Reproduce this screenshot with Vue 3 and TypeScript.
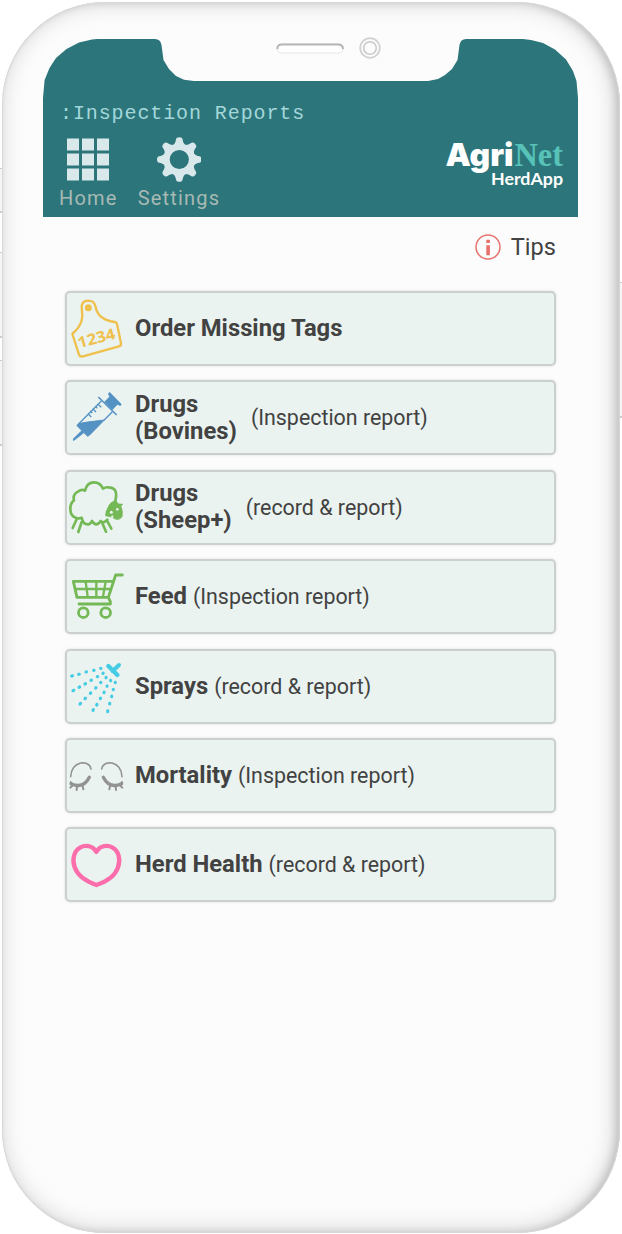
<script setup lang="ts">
type IconName = 'tag' | 'syringe' | 'sheep' | 'cart' | 'spray' | 'eyes' | 'heart'

interface Report {
  icon: IconName
  title: string
  note: string
  stacked?: boolean
  viewBox: string
}

const reports: Report[] = [
  { icon: 'tag', title: 'Order Missing Tags', note: '', viewBox: '21 23 180 213' },
  { icon: 'syringe', title: 'Drugs (Bovines)', note: '(Inspection report)', stacked: true, viewBox: '21 21 180 213' },
  { icon: 'sheep', title: 'Drugs (Sheep+)', note: '(record & report)', stacked: true, viewBox: '21 20 180 213' },
  { icon: 'cart', title: 'Feed', note: '(Inspection report)', viewBox: '21 18 180 213' },
  { icon: 'spray', title: 'Sprays', note: '(record & report)', viewBox: '21 16 180 213' },
  { icon: 'eyes', title: 'Mortality', note: '(Inspection report)', viewBox: '21 15 180 213' },
  { icon: 'heart', title: 'Herd Health', note: '(record & report)', viewBox: '21 14 180 213' },
]

const gearTeeth = [0, 45, 90, 135, 180, 225, 270, 315]

// Jets fan out from the nozzle; each droplet is [x, y].
const droplets: [number, number][][] = [
  [[35, 91], [56, 86], [78, 79], [101, 74], [122, 68]],
  [[39, 135], [57, 125], [75, 115], [93, 104], [112, 93], [129, 83]],
  [[60, 175], [75, 159], [91, 143], [107, 127], [122, 111], [138, 96]],
  [[99, 194], [110, 178], [121, 159], [132, 141], [141, 122], [152, 105]],
  [[143, 198], [149, 175], [155, 153], [160, 132], [166, 111]],
]
</script>

<template>
  <div class="stage">
    <i class="side left a"></i><i class="side left b"></i><i class="side left c"></i><i class="side right"></i>
    <main class="phone">
      <svg class="speaker" viewBox="0 0 110 24" width="110" height="24">
        <rect x="2" y="8" width="66" height="9" rx="4.5" fill="#fff" stroke="#e6e6e6" stroke-width="1.2" />
        <path d="M2.500 13Q2 8.500 7 8.500H63Q68 8.500 68 13" fill="none" stroke="#b5b5b5" stroke-width="2" />
        <circle cx="95" cy="12" r="9.800" fill="#fcfcfc" stroke="#d2d2d2" stroke-width="1.800" />
        <circle cx="95" cy="12" r="6.300" fill="#fcfcfc" stroke="#c9c9c9" stroke-width="1.600" />
      </svg>
      <header class="header">
        <svg class="header-bg" viewBox="43 39 535 178" width="535" height="178">
          <path
            fill="#2c767b"
            d="M43 217V98L44.600 80L49.500 68L56 58L66.500 49L79 42.600L92 39.500L97 39H155Q160.500 39 161.500 45L163.500 60L169 69L176 76L184 79.700L194 81H428L438 79L445 75L452 69L457.500 60L459.500 45Q460.500 39 466 39H523L531 40L543 43L555 49.500L566 59.500L573 71L576.500 81L578 98V217Z"
          />
        </svg>
        <div class="crumb">:Inspection Reports</div>
        <nav class="nav">
          <a class="nav-item home">
            <svg viewBox="0 0 42 42" width="42" height="42" fill="#d8e8eb">
              <template v-for="r in 3" :key="r">
                <rect v-for="c in 3" :key="c" :x="(c - 1) * 15" :y="(r - 1) * 15" width="12" height="12" />
              </template>
            </svg>
            <span>Home</span>
          </a>
          <a class="nav-item settings">
            <svg viewBox="-23.300 -22.500 45 45" width="45" height="45">
              <g fill="#d8e8eb">
                <path
                  v-for="a in gearTeeth"
                  :key="a"
                  :transform="`rotate(${a})`"
                  d="M-8 -13Q-3.800 -15.500 -3.300 -20Q-3 -22.300 0 -22.300Q3 -22.300 3.300 -20Q3.800 -15.500 8 -13Z"
                />
              </g>
              <circle r="12.800" fill="none" stroke="#d8e8eb" stroke-width="6.400" />
            </svg>
            <span>Settings</span>
          </a>
          <svg class="logo" viewBox="0 0 120 60" width="120" height="60">
            <text class="logo-agri" x="0.500" y="30" textLength="68" lengthAdjust="spacingAndGlyphs">Agri</text>
            <text class="logo-net" x="69.500" y="30" textLength="48.500" lengthAdjust="spacingAndGlyphs">Net</text>
            <text class="logo-sub" x="46" y="49" textLength="72" lengthAdjust="spacingAndGlyphs">HerdApp</text>
          </svg>
        </nav>
      </header>
      <div class="tips">
        <svg viewBox="0 0 26 26" width="26" height="26">
          <circle cx="13" cy="13" r="12" fill="none" stroke="#e8716c" stroke-width="1.500" />
          <path d="M11.300 5.700h3.600v3.300h-3.600zM11.300 11.300h3.600v10h-3.600z" fill="#e8716c" />
        </svg>
        <span>Tips</span>
      </div>
      <section class="list">
        <article v-for="item in reports" :key="item.title" class="row" :class="{ stacked: item.stacked }">
          <svg class="icon" :viewBox="item.viewBox" width="60" height="71">
            <g v-if="item.icon === 'tag'" fill="none" stroke="#efc04c" stroke-width="7" stroke-linejoin="round">
              <path d="M65 65Q65 47 84 46Q102 46 106 62Q111 92 137 103Q152 109 164 110Q170 111 171 116L183 174Q184 181 177 183L69 213Q60 215 57 208L38 149Q36 145 42 141Q66 119 67 91Z" />
              <circle cx="85" cy="67" r="10.500" fill="#efc04c" stroke="none" />
              <text class="tag-text" transform="translate(58 189) rotate(-15)" textLength="115" lengthAdjust="spacingAndGlyphs">1234</text>
            </g>
            <g v-else-if="item.icon === 'syringe'" fill="none" stroke="#5592c4">
              <path d="M53 148L51 152L83 184L89 180L133 135L83 141Q61 144 53 148Z" fill="#5592c4" stroke-width="3" stroke-linejoin="round" />
              <path d="M55 148L124 78M132 136L157 110" stroke-width="4" />
              <path d="M115 66L170 120" stroke-width="5" />
              <path d="M133 80L148 65L144 56L149 51L185 88L181 93L172 89L157 105Z" fill="#5592c4" stroke="none" />
              <path d="M66 165L39 191V198L44 196L72 174Z" fill="#5592c4" stroke="none" />
              <path d="M84 116L94 126M91 108L97 114M98 101L108 111M106 94L112 100M113 87L124 97" stroke-width="4" />
            </g>
            <g v-else-if="item.icon === 'sheep'" fill="none" stroke="#74b955" stroke-width="8" stroke-linecap="round" stroke-linejoin="round">
              <path d="M166 106Q176 66 145 66Q137 65 129 70Q121 51 102 51Q81 51 75 76Q65 71 55 78Q37 87 42 105Q31 113 31 130Q31 152 49 158Q58 161 65 157Q69 178 85 177Q92 176 96 167Q109 187 122 167Q131 176 142 163" />
              <path d="M49 164L38 188M65 170L55 200M126 171L138 199M141 166L154 190" />
              <path d="M145 126Q149 110 168 106L174 116L188 117L182 122Q189 136 186 153Q180 166 164 160Q158 154 147 153L137 151Q137 137 145 126Z" fill="#74b955" stroke-width="3" />
              <circle cx="154" cy="141" r="4.500" fill="#eaf3f0" stroke="none" />
              <circle cx="172" cy="132" r="4" fill="#eaf3f0" stroke="none" />
              <circle cx="157" cy="154" r="3.500" fill="#eaf3f0" stroke="none" />
            </g>
            <g v-else-if="item.icon === 'cart'" fill="none" stroke="#74b955" stroke-width="8.500" stroke-linecap="round" stroke-linejoin="round">
              <path d="M187 60H167L145 127H51L40 79H161M57 147H151V140L145 127" />
              <path d="M46 102H152M77 80L83 125M109 80V125M137 80L129 125" stroke-width="7" />
              <circle cx="70" cy="173" r="14.500" />
              <circle cx="137" cy="173" r="14.500" />
            </g>
            <g v-else-if="item.icon === 'spray'" fill="none" stroke="#45cbe4" stroke-linecap="round">
              <path d="M145 61L172 88" stroke-width="13" />
              <path d="M158 76L177 58" stroke-width="12" />
              <template v-for="(jet, j) in droplets" :key="j">
                <path v-for="([x, y], k) in jet" :key="k" :d="`M${x} ${y}l${(158 - x) / 55} ${(70 - y) / 55}`" stroke-width="9.500" />
              </template>
            </g>
            <g v-else-if="item.icon === 'eyes'" fill="none" stroke="#929292" stroke-linecap="round">
              <g v-for="flip in ['', 'translate(218 0) scale(-1 1)']" :key="flip" :transform="flip">
                <path d="M32 125Q34 91 62 84Q89 81 93 102" stroke-width="4.500" />
                <path d="M33 146Q70 163 88 127" stroke-width="10" />
                <path d="M39 150L31 158M51 154L50 165M68 153L70 163M32 141L36 147" stroke-width="6" />
              </g>
            </g>
            <path
              v-else
              d="M109 83C97 63 76 61 60 70C41 81 36 106 44 129C55 159 83 173 109 182C136 173 164 159 174 129C182 106 177 81 158 70C142 61 121 63 109 83Z"
              fill="none" stroke="#fb6eab" stroke-width="13" stroke-linejoin="round"
            />
          </svg>
          <div class="label">
            <strong>{{ item.title }}</strong>
            <span v-if="item.note">{{ item.note }}</span>
          </div>
        </article>
      </section>
    </main>
  </div>
</template>

<style>
body {
  margin: 0;
  background: #fff;
}
</style>

<style scoped>
.stage {
  position: relative;
  box-sizing: border-box;
  width: 622px;
  height: 1234px;
  padding: 2px 2px 1px 1.5px;
  overflow: hidden;
  font-family: Roboto, "Liberation Sans", sans-serif;
  color: #424242;
}
.side {
  position: absolute;
  width: 4px;
  box-sizing: border-box;
  background: #f5f5f5;
  border-top: 1px solid #ccc;
  border-bottom: 2px solid #ccc;
}
.left { left: 0; }
.right { right: 0; top: 282px; height: 136px; }
.a { top: 168px; height: 45px; }
.b { top: 252px; height: 86px; }
.c { top: 360px; height: 86px; }
.phone {
  position: relative;
  box-sizing: border-box;
  display: flex;
  flex-direction: column;
  height: 1231px;
  padding: 0 41.5px;
  border-radius: 103px;
  background: #fcfcfc;
  box-shadow:
    inset 0 0 1px 1px #d8d8d8,
    inset -4px 0 8px rgba(0, 0, 0, 0.16),
    inset -3px -1px 22px 3px rgba(0, 0, 0, 0.15);
}
.speaker {
  margin: 34px 0 -21px 232px;
  position: relative;
  z-index: 1;
  flex: none;
}
.header {
  position: relative;
  width: 535px;
  height: 178px;
  flex: none;
}
.header-bg {
  position: absolute;
  inset: 0;
  z-index: 0;
}
.crumb {
  position: relative;
  padding: 63px 0 0 17px;
  font: 20px/24px "Liberation Mono", monospace;
  letter-spacing: 0.9px;
  color: #a4d7da;
}
.nav {
  position: relative;
  display: flex;
  padding: 8px 13px 0 16px;
}
.nav-item {
  display: flex;
  flex-direction: column;
  align-items: center;
  color: #a7b9b4;
  font-size: 20px;
  line-height: 24px;
  letter-spacing: 1.2px;
}
.nav-item svg { height: 45px; margin: 2.5px 0 4.5px; }
.settings { margin-left: 20px; }
.logo { margin: 2px 0 0 auto; overflow: visible; }
.logo-agri { font: 900 31.5px Inter, sans-serif; fill: #fff; }
.logo-net { font: bold 34px "Liberation Serif", serif; fill: #57c2b8; }
.logo-sub { font: bold 17.5px Lato, sans-serif; fill: #fff; }
.tips {
  display: flex;
  justify-content: flex-end;
  align-items: center;
  gap: 10px;
  height: 30px;
  margin: 15px 22.5px 0 0;
  font-size: 23.6px;
  line-height: 30px;
}
.list {
  display: flex;
  flex-direction: column;
  gap: 14.4px;
  margin: 29px 22.5px 0 22px;
}
.row {
  box-sizing: border-box;
  display: flex;
  align-items: center;
  height: 75px;
  border: 2px solid #cbd0ce;
  border-radius: 5px;
  background: #eaf3f0;
  box-shadow: 0 0 3px rgba(0, 0, 0, 0.12);
}
.icon { flex: none; }
.label {
  display: flex;
  align-items: baseline;
  gap: 6px;
  padding-left: 8px;
  font-size: 21.4px;
  line-height: 27px;
  white-space: nowrap;
}
.label strong { font-size: 23.8px; font-weight: 700; }
.stacked .label { align-items: center; gap: 14px; }
.stacked strong { width: min-content; white-space: normal; }
.tag-text { font: bold 46px "Noto Sans", sans-serif; fill: #efc04c; stroke: none; }
</style>
